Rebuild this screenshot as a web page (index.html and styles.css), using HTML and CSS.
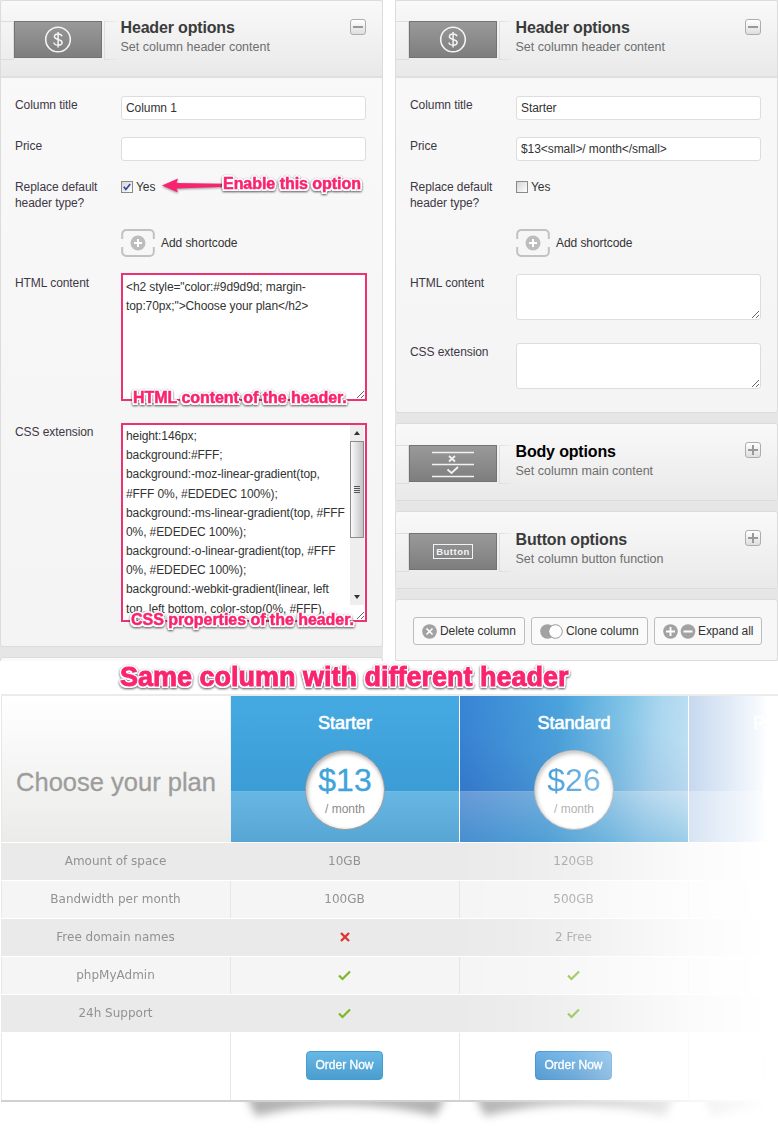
FILE: index.html
```html
<!DOCTYPE html>
<html lang="en">
<head>
<meta charset="utf-8">
<title>Pricing table columns</title>
<link rel="stylesheet" href="styles.css">
</head>
<body>
<svg class="defs" width="0" height="0">
  <defs>
    <symbol id="grip" viewBox="0 0 9 9"><path d="M1 8L8 1M5 8L8 5" stroke="#666" fill="none"/></symbol>
    <symbol id="shortcode" viewBox="0 0 34 28"><path d="M1.200 10V5a4 4 0 0 1 4-4h23.600a4 4 0 0 1 4 4v5M1.200 18v5a4 4 0 0 0 4 4h23.600a4 4 0 0 0 4-4v-5" fill="none" stroke="#c2c2c2" stroke-width="2"/><circle cx="17" cy="14" r="7.500" fill="#bdbdbd"/><path d="M17 10v8M13 14h8" stroke="#fff" stroke-width="2"/></symbol>
    <symbol id="dollar" viewBox="0 0 88 37"><circle cx="44" cy="18.500" r="12.300" fill="none" stroke="#f4f4f4" stroke-width="1.600"/><path d="M48 15.200c-.5-1.500-1.900-2.200-3.900-2.200-2.200 0-3.700 1-3.700 2.600 0 3.800 7.700 2 7.700 5.900 0 1.700-1.600 2.700-4 2.700-2.300 0-3.900-.9-4.200-2.700M44.100 11v15.500" fill="none" stroke="#f4f4f4" stroke-width="1.500"/></symbol>
    <symbol id="tick" viewBox="0 0 13 11"><path d="M1 5.500l3.500 3.500L12 1.500" fill="none" stroke="#7fb726" stroke-width="2.200"/></symbol>
  </defs>
</svg>
<div class="editor">
  <div class="column">
    <section class="card open">
      <header class="head">
        <div class="thumb"><svg viewBox="0 0 88 37"><use href="#dollar"/></svg></div>
        <div class="titles"><h3>Header options</h3><p>Set column header content</p></div>
        <span class="toggle minus"></span>
      </header>
      <div class="form">
        <div class="row"><label>Column title</label><div class="input">Column 1</div></div>
        <div class="row"><label>Price</label><div class="input"></div></div>
        <div class="row check"><label>Replace default<br>header type?</label><div class="yes"><span class="box"><svg viewBox="0 0 11 11"><path d="M2 5.200l2.300 3L9 2.200" fill="none" stroke="#34469c" stroke-width="1.900"/></svg></span>Yes</div></div>
        <div class="row code"><span></span><div class="shortcode"><svg viewBox="0 0 34 28"><use href="#shortcode"/></svg>Add shortcode</div></div>
        <div class="row html-tall"><label>HTML content</label><div class="area marked"><div class="code-text">&lt;h2 style="color:#9d9d9d; margin-<br>top:70px;"&gt;Choose your plan&lt;/h2&gt;</div><svg class="grip" viewBox="0 0 9 9"><use href="#grip"/></svg><strong class="note note-html">HTML content of the header.</strong></div></div>
        <div class="row css-tall"><label>CSS extension</label><div class="area marked"><div class="code-text">height:146px;<br>background:#FFF;<br>background:-moz-linear-gradient(top,<br>#FFF 0%, #EDEDEC 100%);<br>background:-ms-linear-gradient(top, #FFF<br>0%, #EDEDEC 100%);<br>background:-o-linear-gradient(top, #FFF<br>0%, #EDEDEC 100%);<br>background:-webkit-gradient(linear, left<br>top, left bottom, color-stop(0%, #FFF),</div>
          <div class="scrollbar"><i class="up"></i><div class="thumb-bar"><i></i><i></i><i></i><i></i></div><i class="down"></i></div><svg class="grip" viewBox="0 0 9 9"><use href="#grip"/></svg><strong class="note note-css">CSS properties of the header.</strong></div></div>
      </div>
      <svg class="arrow" viewBox="0 0 64 20"><path d="M0 10.500L16 3.500 14.500 8 64 8.800v3L14.500 13.500 16 17.500z" fill="#f9246f"/></svg>
      <strong class="note note-enable">Enable this option</strong>
    </section>
    <section class="card peek"></section>
  </div>
  <div class="column">
    <section class="card open">
      <header class="head">
        <div class="thumb"><svg viewBox="0 0 88 37"><use href="#dollar"/></svg></div>
        <div class="titles"><h3>Header options</h3><p>Set column header content</p></div>
        <span class="toggle minus"></span>
      </header>
      <div class="form">
        <div class="row"><label>Column title</label><div class="input">Starter</div></div>
        <div class="row"><label>Price</label><div class="input">$13&lt;small&gt;/ month&lt;/small&gt;</div></div>
        <div class="row check"><label>Replace default<br>header type?</label><div class="yes"><span class="box"></span>Yes</div></div>
        <div class="row code"><span></span><div class="shortcode"><svg viewBox="0 0 34 28"><use href="#shortcode"/></svg>Add shortcode</div></div>
        <div class="row short"><label>HTML content</label><div class="area"><svg class="grip" viewBox="0 0 9 9"><use href="#grip"/></svg></div></div>
        <div class="row short"><label>CSS extension</label><div class="area"><svg class="grip" viewBox="0 0 9 9"><use href="#grip"/></svg></div></div>
      </div>
    </section>
    <section class="card">
      <header class="head">
        <div class="thumb"><svg viewBox="0 0 88 37"><path d="M23 7.500h42M23 19.500h42M23 31.500h42" stroke="#f2f2f2" stroke-width="1.500"/><path d="M40 11l6 5.500M46 11l-6 5.500M38.500 24.500l4 3.500 6.500-6" fill="none" stroke="#f2f2f2" stroke-width="1.800"/></svg></div>
        <div class="titles active"><h3>Body options</h3><p>Set column main content</p></div>
        <span class="toggle plus"></span>
      </header>
    </section>
    <section class="card">
      <header class="head">
        <div class="thumb"><span class="mini">Button</span></div>
        <div class="titles"><h3>Button options</h3><p>Set column button function</p></div>
        <span class="toggle plus"></span>
      </header>
    </section>
    <footer class="card actions">
      <div class="btn del"><svg width="15" height="15" viewBox="0 0 15 15"><circle cx="7.500" cy="7.500" r="7.300" fill="#a2a2a2"/><path d="M4.500 4.500l6 6M10.500 4.500l-6 6" stroke="#fff" stroke-width="1.700"/></svg>Delete column</div>
      <div class="btn clone"><svg width="23" height="15" viewBox="0 0 23 15"><circle cx="7.500" cy="7.500" r="7.300" fill="#a2a2a2"/><circle cx="15.500" cy="7.500" r="6.800" fill="#fff" stroke="#999"/></svg>Clone column</div>
      <div class="btn all"><svg width="33" height="15" viewBox="0 0 33 15"><circle cx="7.500" cy="7.500" r="7.300" fill="#a2a2a2"/><circle cx="25" cy="7.500" r="7.300" fill="#a2a2a2"/><path d="M7.500 3v9M3 7.500h9M20.500 7.500h9" stroke="#fff" stroke-width="1.900"/></svg>Expand all</div>
    </footer>
  </div>
</div>
<h1 class="caption"><span class="note">Same column with different header</span></h1>
<div class="plans">
  <div class="line heads">
    <div class="choose">Choose your plan</div>
    <div class="plan starter"><h2>Starter</h2><div class="price"><b>$13</b><small>/ month</small></div></div>
    <div class="plan standard"><h2>Standard</h2><div class="price"><b>$26</b><small>/ month</small></div></div>
    <div class="plan faded"><h2>Pr</h2><div class="price"></div></div>
  </div>
  <div class="rows">
    <div class="line dark"><div>Amount of space</div><div>10GB</div><div>120GB</div><div></div></div>
    <div class="line"><div>Bandwidth per month</div><div>100GB</div><div>500GB</div><div></div></div>
    <div class="line dark"><div>Free domain names</div><div><svg width="10" height="10" viewBox="0 0 10 10"><path d="M1 1l8 8M9 1L1 9" stroke="#dc3532" stroke-width="2.400"/></svg></div><div>2 Free</div><div></div></div>
    <div class="line"><div>phpMyAdmin</div><div><svg width="13" height="11"><use href="#tick"/></svg></div><div><svg width="13" height="11"><use href="#tick"/></svg></div><div></div></div>
    <div class="line dark"><div>24h Support</div><div><svg width="13" height="11"><use href="#tick"/></svg></div><div><svg width="13" height="11"><use href="#tick"/></svg></div><div></div></div>
    <div class="line orders"><div></div><div><span class="order">Order Now</span></div><div><span class="order blue">Order Now</span></div><div><span class="order"></span></div></div>
    <div class="line shadows"><div></div><div><svg viewBox="0 0 228 28"><path d="M14-6H214L204 14Q114-8 24 14z"/></svg></div><div><svg viewBox="0 0 228 28"><path d="M14-6H214L204 14Q114-8 24 14z"/></svg></div><div><svg viewBox="0 0 228 28"><path d="M14-6H214L204 14Q114-8 24 14z"/></svg></div></div>
  </div>
</div>
</body>
</html>
```

FILE: styles.css
```css
* { box-sizing: border-box; }
body { margin: 0; width: 778px; height: 1142px; overflow: hidden; background: #fff; font: 12px/16px "Liberation Sans", Arial, sans-serif; color: #333; }
h1, h2, h3, p { margin: 0; }
svg { display: block; }
.defs { position: absolute; }

.editor { display: flex; gap: 12px; height: 661px; }
.column { width: 383px; height: 661px; overflow: hidden; display: flex; flex-direction: column; gap: 10px; background: #e6e6e6; }
.card { position: relative; flex: none; border: 1px solid #dcdcdc; border-radius: 3px; background: #f7f7f7; }
.open { background: linear-gradient(#f9f9f9, #f4f4f4); }
.peek { height: 30px; background: #fafafa; }
.head { display: flex; height: 76px; padding: 21px 16px 0 4px; background: linear-gradient(#f9f9f9, #e9e9e9); border-radius: 3px; }
.open .head { height: 77px; padding-top: 20px; border-bottom: 2px solid #e0e0e0; border-radius: 3px 3px 0 0; }
.thumb { display: flex; align-items: center; justify-content: center; position: relative; width: 88px; height: 37px; margin-left: 9px; border: 1px solid #737373; background: linear-gradient(#999, #7e7e7e); }
.thumb svg { width: 88px; height: 37px; flex: none; }
.thumb::before, .thumb::after { content: ""; position: absolute; top: -1px; height: 37px; border: 1px solid #ddd; }
.thumb::before { left: -14px; width: 12px; border-left: 0; }
.thumb::after { left: 89px; width: 15px; border-right: 0; -webkit-mask: linear-gradient(90deg, #000, transparent); mask: linear-gradient(90deg, #000, transparent); }
.titles { flex: 1; padding-left: 18.500px; white-space: nowrap; }
.titles h3 { font-size: 16px; line-height: 16px; color: #3b3b3b; margin-top: -1px; letter-spacing: -.16px; }
.titles.active h3 { color: #000; }
.titles p { margin-top: 3px; color: #6e6e6e; font-size: 12.500px; letter-spacing: 0; }
.toggle { position: relative; width: 16px; height: 16px; margin-top: -3px; border: 1px solid #adadad; border-radius: 3px; background: linear-gradient(#fff, #dedede); }
.open .toggle { margin-top: -2px; }
.toggle::before, .plus::after { content: ""; position: absolute; left: 2px; top: 6px; width: 10px; height: 2px; background: #999; }
.plus::after { transform: rotate(90deg); }
.mini { padding: 0 2px; height: 15px; border: 1px solid #f2f2f2; color: #f4f4f4; font: bold 9.500px/13px "Liberation Sans", Arial, sans-serif; letter-spacing: .5px; }

.form { padding: 18px 16px 0 14px; letter-spacing: -.07px; }
.row { display: grid; grid-template-columns: 106px 245px; align-items: start; height: 41px; }
.row label { padding-top: 1px; color: #3f3745; white-space: nowrap; }
.input, .area { position: relative; border: 1px solid #ddd; border-radius: 3px; background: #fff; }
.input { height: 24px; padding: 0 4px; line-height: 23px; }
.check { height: 51px; }
.yes { display: flex; align-items: center; gap: 3px; height: 17px; }
.box { width: 12px; height: 12px; border: 1px solid #8a8a8a; background: linear-gradient(135deg, #d5d5d5, #fff); }
.box svg { width: 10px; height: 10px; }
.code { height: 45px; }
.shortcode { display: flex; align-items: center; gap: 6px; }
.shortcode svg { width: 34px; height: 28px; }
.short { height: 69px; }
.short .area { height: 46px; }
.html-tall { height: 149px; }
.html-tall .area { height: 128px; margin-top: -1px; }
.css-tall { height: 223px; }
.css-tall .area { height: 199px; }
.marked { border: 2px solid #ed3274; border-radius: 0; width: 246px; }
.code-text { padding: 3px 3px 0; line-height: 19.170px; white-space: nowrap; letter-spacing: -.1px; }
.css-tall .code-text { padding-top: 2px; }
.grip { position: absolute; right: 0; bottom: 0; width: 9px; height: 9px; }
.scrollbar { position: absolute; right: 1px; top: 0; width: 14px; height: 180px; display: flex; flex-direction: column; align-items: center; background: #eee; }
.up, .down { border: 3px solid transparent; }
.up { border-bottom: 4px solid #333; border-top: 0; margin-top: 6px; }
.down { border-top: 4px solid #333; border-bottom: 0; margin-top: auto; margin-bottom: 6px; }
.thumb-bar { width: 14px; height: 97px; margin-top: 6px; border: 1px solid #8c8c8c; background: linear-gradient(90deg, #fafafa, #c3c3c6); display: flex; flex-direction: column; align-items: center; justify-content: center; gap: 1px; }
.thumb-bar i { width: 6px; height: 1px; background: #555; }

.note { color: #f9246f; font: bold 16px/18px "Liberation Sans", Arial, sans-serif; letter-spacing: -.04px; white-space: nowrap; -webkit-text-stroke: .5px #f9246f; text-shadow: 2px 0 #fff, -2px 0 #fff, 0 2px #fff, 0 -2px #fff, 1.500px 1.500px #fff, -1.500px 1.500px #fff, 1.500px -1.500px #fff, -1.500px -1.500px #fff; filter: drop-shadow(0 1px 1px rgba(0,0,0,.65)); }
.note-html { position: absolute; left: 10px; top: 114px; }
.note-css { position: absolute; left: 8px; top: 186px; }
.note-enable { position: absolute; left: 222px; top: 174px; }
.arrow { position: absolute; left: 161px; top: 174px; width: 64px; height: 20px; filter: drop-shadow(0 1px 1px rgba(0,0,0,.4)); }
.caption { height: 33px; padding-left: 120px; }
.caption .note { position: relative; display: block; font-size: 27px; line-height: 33px; letter-spacing: 0; -webkit-text-stroke-width: .9px; }

.btn { display: flex; align-items: center; gap: 3px; height: 28px; border: 1px solid #bdbdbd; border-radius: 3px; background: #fafafa; padding-left: 8px; white-space: nowrap; letter-spacing: -.07px; }
.actions { display: flex; gap: 6px; height: 62px; padding: 17px 0 0 17px; }
.del { width: 112px; }
.clone { width: 117px; }
.all { width: 108px; gap: 2px; }

.plans { width: 777px; margin-left: 1px; overflow: hidden; }
.line { display: grid; grid-template-columns: 230px 229px 229px 89px; }
.heads { height: 148px; border-top: 2px solid #ebebeb; }
.choose, .rows .line > div:first-child { border-left: 1px solid #e8e8e8; }
.choose { display: flex; align-items: center; justify-content: center; padding-top: 26px; background: linear-gradient(#fff, #ebebea); color: #9d9d9d; font-size: 25.500px; border-right: 1px solid #ececec; -webkit-text-stroke: .3px #9d9d9d; }
.plan { position: relative; display: flex; flex-direction: column; align-items: center; border-right: 1px solid #fff; overflow: hidden; color: #fff; background: linear-gradient(#46aae2, #3b9cd6 95px, #76bfe8 95px, #67b7e5 96px, #57a5d3); }
.plan h2 { margin-top: 17px; font-size: 18px; line-height: 20px; font-weight: normal; -webkit-text-stroke: .6px #fff; }
.price { display: flex; flex: none; flex-direction: column; align-items: center; width: 80px; height: 80px; margin-top: 17px; border: 1px solid #999; border-radius: 50%; background: #fff; box-shadow: inset 1px 2px 4px rgba(0,0,0,.35); color: #3fa3dc; }
.price b { margin-top: 11px; font-size: 32px; line-height: 36px; font-weight: normal; -webkit-text-stroke: .3px #3fa3dc; }
.price small { margin-top: 3px; font-size: 12px; line-height: 16px; color: #8b8b8b; }
.standard { background: linear-gradient(transparent 95px, rgba(255,255,255,.35) 95px, rgba(255,255,255,.26) 96px, rgba(120,220,240,.3)), linear-gradient(20deg, rgba(30,50,150,.34), rgba(60,90,170,.1) 50%, transparent 80%), linear-gradient(97deg, #3787d8, #4ba4dc 42%, #80c3e6 67%, #aad6ef 82%, #c5e3f4); }
.standard .price { border-color: #bbb; box-shadow: inset 1px 2px 4px rgba(0,0,0,.25); }
.standard b { background: linear-gradient(90deg, #489fdd, #80bce7); -webkit-background-clip: text; background-clip: text; color: transparent; -webkit-text-stroke: 0; }
.standard small { color: #b3b3b3; }
.faded { border: 0; background: linear-gradient(transparent 95px, rgba(255,255,255,.3) 95px), linear-gradient(90deg, #c6d8ef, #e4edf8 50%, #f4f8fd 75%, #fff 90%); }
.faded h2 { align-self: flex-start; margin-left: 64px; }
.faded .price { position: relative; left: 69px; border: 0; box-shadow: none; }

.rows { -webkit-mask: linear-gradient(90deg, #000 455px, rgba(0,0,0,.9) 510px, rgba(0,0,0,.7) 575px, rgba(0,0,0,.45) 630px, rgba(0,0,0,.2) 690px, transparent 768px); mask: linear-gradient(90deg, #000 455px, rgba(0,0,0,.9) 510px, rgba(0,0,0,.7) 575px, rgba(0,0,0,.45) 630px, rgba(0,0,0,.2) 690px, transparent 768px); font: 12px/16px "DejaVu Sans", Verdana, sans-serif; color: #929292; }
.rows .line { height: 38px; border-top: 1px solid #fff; background: #f5f5f5; }
.rows .dark { background: #eaeaea; }
.rows .line > div { display: flex; align-items: center; justify-content: center; padding: 0 1px 1px 0; border-right: 1px solid #e6e6e6; }
.rows .dark > div { border-right-color: #eaeaea; }
.rows .orders { height: 70px; background: #fff; border-bottom: 2px solid #d0d0d0; }
.rows .orders > div { padding-bottom: 3px; }
.order { width: 77px; height: 29px; border: 1px solid #419fd7; border-radius: 4px; background: linear-gradient(#68b8e6, #4b9dcd); color: #fff; font: 12px/26px "Liberation Sans", Arial, sans-serif; text-align: center; -webkit-text-stroke: .3px #fff; }
.blue { background: linear-gradient(#4a9fe0, #3386c6); border-color: #287fc9; }
.rows .orders > div:last-child { overflow: hidden; justify-content: flex-start; }
.orders > div:last-child .order { flex: none; margin-left: 74px; }
.rows .shadows { height: 28px; border: 0; background: none; }
.rows .shadows > div, .rows .shadows > div:first-child { border: 0; overflow: hidden; padding: 0; }
.rows .shadows > div:last-child { justify-content: flex-start; }
.shadows svg { width: 228px; height: 28px; flex: none; overflow: visible; filter: blur(4px); fill: rgba(0,0,0,.3); }
```
